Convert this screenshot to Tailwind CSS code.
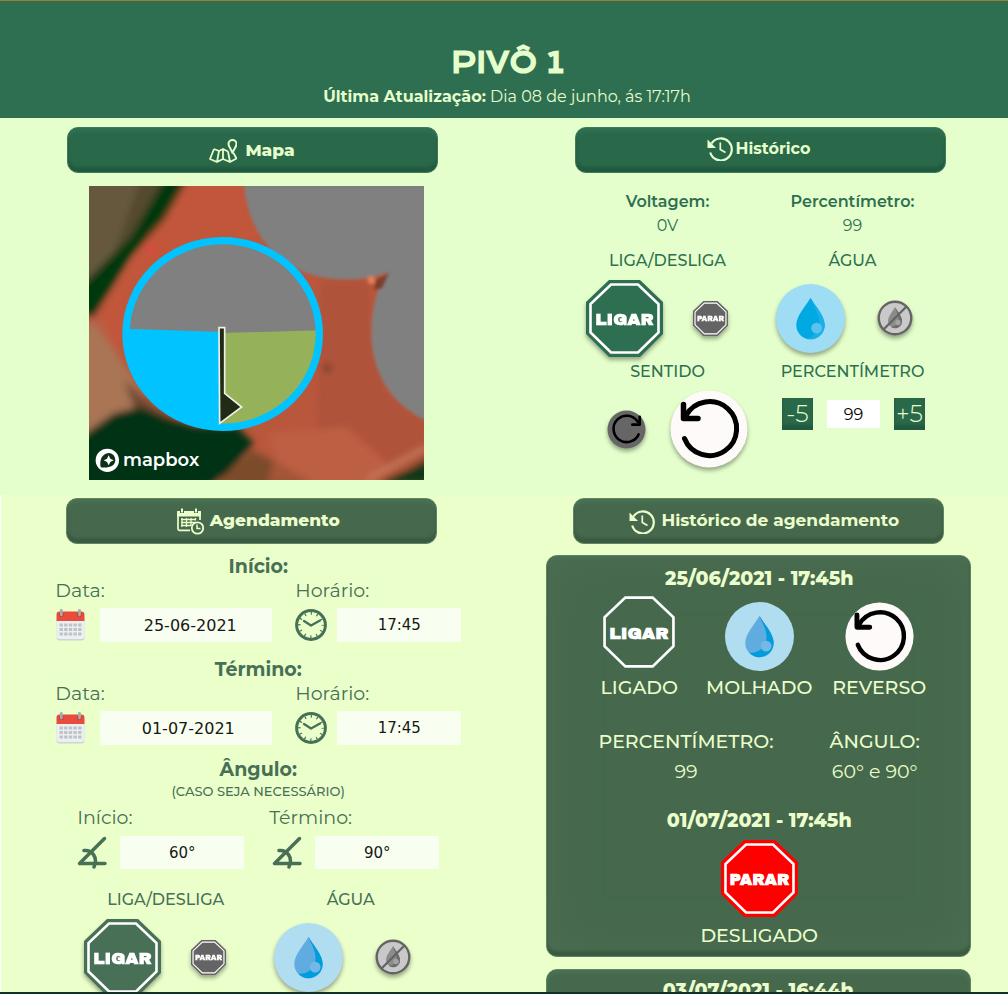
<!DOCTYPE html>
<html lang="pt-BR">
<head>
<meta charset="utf-8">
<meta name="viewport" content="width=device-width, initial-scale=1">
<title>Pivô 1</title>
<script src="https://cdn.jsdelivr.net/npm/@tailwindcss/browser@4"></script>
</head>
<body class="h-screen flex flex-col overflow-hidden bg-[#ebffcb] font-['Montserrat','Inter',sans-serif]">

<svg class="hidden" aria-hidden="true">
  <symbol id="oct" viewBox="0 0 77 77">
    <path d="M23 0H54L77 22V54L54 77H23L0 54V22Z" fill="currentColor"/>
    <path d="M25 4.500H52L72.500 24V52.500L52 72.500H25L4.500 52.500V24Z" fill="none" stroke="#fff" stroke-width="2.600"/>
  </symbol>
  <symbol id="ligar" viewBox="0 0 77 77">
    <use href="#oct"/>
    <text x="38.500" y="45" text-anchor="middle" fill="#fff" font-family="'Archivo Black', Montserrat, sans-serif" font-weight="900" font-size="17">LIGAR</text>
  </symbol>
  <symbol id="parar" viewBox="0 0 77 77">
    <use href="#oct"/>
    <text x="38.500" y="44.500" text-anchor="middle" fill="#fff" font-family="'Archivo Black', Montserrat, sans-serif" font-weight="900" font-size="16">PARAR</text>
  </symbol>
  <symbol id="agua-a" viewBox="-34 -34 68 68">
    <circle r="34" fill="#9eddf3"/>
    <path d="M0-20.500C4-13 14-3 14 6.500A14 14 0 0 1-14 6.500C-14-3-4-13 0-20.500Z" fill="#00a9e2"/>
    <path d="M0-20.500C4-13 14-3 14 6.500A14 14 0 0 1-3 20C6 17 11 9 8-1C6-8 2-14 0-20.500Z" fill="#18b0e6"/>
    <circle cx="6" cy="9.500" r="5.300" fill="#5cc1ee"/>
  </symbol>
  <symbol id="agua-b" viewBox="-34 -34 68 68">
    <circle r="34" fill="#b1ddf0"/>
    <path d="M0-20.500C4-13 14-3 14 6.500A14 14 0 0 1-14 6.500C-14-3-4-13 0-20.500Z" fill="#60abe0"/>
    <path d="M0-20.500C4-13 14-3 14 6.500A14 14 0 0 1-10 16C-2 17 7 11 7 1C7-8 2-14 0-20.500Z" fill="#009ddd"/>
    <circle cx="6.500" cy="9.500" r="5.300" fill="#74b8e6"/>
  </symbol>
  <symbol id="seco" viewBox="-18 -18 36 36">
    <circle r="16.300" fill="#c9c9c9" stroke="#646464" stroke-width="2.400"/>
    <path d="M0-11C2-7 7-2 7 3A7 7 0 0 1-7 3C-7-2-2-7 0-11Z" fill="#8c8c8c"/>
    <path d="M0-11C2-7 7-2 7 3A7 7 0 0 1-4 9C2 8 5 4 3-2Z" fill="#6c6c6c"/>
    <circle cx="3" cy="4.500" r="2.700" fill="#a3a3a3"/>
    <path d="M11.500-11.500L-11.500 11.500" stroke="#646464" stroke-width="2.300"/>
  </symbol>
  <symbol id="reverso" viewBox="-39 -39 78 78">
    <circle r="38.500" fill="#fffafa"/>
    <path d="M-24.500 9.500A27 27 0 1 0-23-13.500" fill="none" stroke="#000" stroke-width="5" stroke-linecap="round"/>
    <path d="M-25.500-24.500V-10.500H-11" fill="none" stroke="#000" stroke-width="5.500" stroke-linecap="round" stroke-linejoin="round"/>
  </symbol>
  <symbol id="horario" viewBox="-20 -20 40 40">
    <circle r="19.500" fill="#666"/>
    <path d="M12.500 5A13.500 13.500 0 1 1 11.500-8" fill="none" stroke="#000" stroke-width="2.600" stroke-linecap="round"/>
    <path d="M13.500-13V-5H6" fill="none" stroke="#000" stroke-width="2.800" stroke-linecap="round" stroke-linejoin="round"/>
  </symbol>
  <symbol id="hist" viewBox="0 0 26 25">
    <path d="M3.200 16.500A11 11 0 1 0 4.500 7.500" fill="none" stroke="currentColor" stroke-width="2.200"/>
    <path d="M.5 3.500V12H9Z" fill="currentColor"/>
    <path d="M13.300 6.500V13.500L18.500 16.500" fill="none" stroke="currentColor" stroke-width="1.700"/>
  </symbol>
  <symbol id="cal" viewBox="0 0 28 32">
    <path d="M0 11H28V28.500A3 3 0 0 1 25 31.500H3A3 3 0 0 1 0 28.500Z" fill="#cfd3d8"/>
    <path d="M0 11H28V27A3 3 0 0 1 25 30H3A3 3 0 0 1 0 27Z" fill="#ecf0f1"/>
    <path d="M3 2.500H25A3 3 0 0 1 28 5.500V12H0V5.500A3 3 0 0 1 3 2.500Z" fill="#e84c3d"/>
    <circle cx="4.800" cy="5.800" r="2.300" fill="#b33a30"/><circle cx="23" cy="5.800" r="2.300" fill="#b33a30"/>
    <path d="M4.800 1.500V6M23 1.500V6" stroke="#a5abb0" stroke-width="2.800" stroke-linecap="round"/>
    <path d="M3 16H25M3 20.500H25M3 25H25" stroke="#bdc3c7" stroke-width="3" stroke-dasharray="3.400 1.250"/>
  </symbol>
  <symbol id="clock" viewBox="-16 -16 32 32">
    <circle r="14.400" fill="none" stroke="currentColor" stroke-width="3"/>
    <circle r="11.600" fill="none" stroke="currentColor" stroke-width="2.600" stroke-dasharray="1.200 4.874" stroke-dashoffset=".6"/>
    <path d="M-7-4L0 .5L9-4.500" fill="none" stroke="currentColor" stroke-width="2.300" stroke-linecap="round" stroke-linejoin="round"/>
  </symbol>
  <symbol id="ang" viewBox="0 0 30 33">
    <path d="M27 2.500L2 27.500H27.500" fill="none" stroke="currentColor" stroke-width="3.500" stroke-linecap="round" stroke-linejoin="round"/>
    <path d="M6.500 14.500C14 13.500 21 21 16.500 31" fill="none" stroke="currentColor" stroke-width="3.500" stroke-linecap="round"/>
  </symbol>
</svg>

<header class="shrink-0 border-t border-[#9a7f38] bg-[#2f6f51] pt-11 pb-[9px] pl-[6px] text-center text-[#e5fecb]">
  <h1 class="font-['Krona_One','Montserrat',sans-serif] text-[28px] leading-9 font-extrabold">PIVÔ 1</h1>
  <p class="pt-1 text-base leading-6"><b class="font-bold">Última Atualização:</b> Dia 08 de junho, ás 17:17h</p>
</header>

<main class="flex min-h-0 flex-1 flex-col">
  <div class="grid shrink-0 grid-cols-2 bg-[#e4ffcb] pb-4">
    <section class="flex flex-col items-center pt-[9px]">
      <button class="flex h-[46px] w-[371px] items-center justify-center gap-2 rounded-[11px] border border-[#3e7b5b] bg-[#2a684a] pt-px text-[17px] font-extrabold text-[#e5fecb] shadow-[inset_0_-5px_3px_#215a40,inset_0_4px_3px_#2f7052]">
        <svg class="h-6 w-7" viewBox="0 0 28 24" fill="none" stroke="currentColor" stroke-width="1.800" stroke-linejoin="round" aria-hidden="true"><path d="M5 10L1 20L8 23L14 20L21 23L27.500 19.500L24.500 14M5 10L10 12L14 10L19 12.500M10 12L8 23M14 10V20M19 12.500L21 23"/><path d="M23.500 14C22 10 19.500 7.500 19.500 5A4 4 0 0 1 27.500 5C27.500 7.500 25 10 23.500 14Z" stroke-width="2"/></svg>
        Mapa
      </button>
      <svg class="mt-[13px] ml-2 h-[294px] w-[335px]" viewBox="25 18 1005 882" preserveAspectRatio="none" role="img" aria-label="Mapa do pivô">
        <defs><filter id="soft" x="-10%" y="-10%" width="120%" height="120%"><feGaussianBlur stdDeviation="11"/></filter><filter id="edge" x="-10%" y="-10%" width="120%" height="120%"><feGaussianBlur stdDeviation="4"/></filter></defs>
        <path fill="#b9573c" d="M25 18H1030V900H25Z"/>
        <g filter="url(#soft)">
          <path fill="#c1573b" d="M320 0H520L560 170L250 260L100 520L40 420Z"/>
          <path fill="#b75f47" d="M0 390L60 420L150 600L230 700L0 780Z"/>
          <path fill="#a97555" d="M0 430L50 440L190 640L170 690L0 770Z"/>
          <path fill="#6f4a30" d="M130 600L220 680L300 730L170 710Z"/>
          <path fill="#b0523a" d="M720 300H870V460L920 640L1040 730V850L860 900H700Z"/>
          <path fill="#bd5f43" d="M560 760L800 740L930 860L850 920H620Z"/>
          <path fill="#65583d" d="M0 0H280L190 130L60 270L0 330Z"/>
          <path fill="#544a2f" d="M180 0H280L190 130L100 220Z"/>
          <path fill="#04380c" d="M250 0H320L250 120L150 230L90 330L40 410H0V320L70 250L150 170Z"/>
          <path fill="#003312" d="M0 770L100 700L180 680L260 715L340 740H470L520 790L440 880L380 920H0Z"/>
          <path fill="#7b4b2b" d="M515 810L590 850L670 920H400Z"/>
          <path fill="#a55538" d="M580 840L700 910H560Z"/>
          <path fill="#073914" d="M1050 830L980 870L890 910H1050Z"/>
          <path stroke="#c98160" stroke-width="12" d="M1040 800L860 900"/>
          <circle cx="740" cy="565" r="13" fill="#75402a"/>
          <circle cx="212" cy="205" r="16" fill="#dc4740"/>
        </g>
        <g filter="url(#edge)">
          <path fill="#808080" d="M490 0C495 160 600 300 800 298C850 298 890 290 925 275C890 320 872 380 872 460C874 590 940 680 1050 728V0Z"/>
          <path fill="#7b4029" d="M885 300L925 280L905 325L880 330Z"/>
          <circle cx="872" cy="300" r="12" fill="#e07f52"/>
        </g>
        <ellipse cx="426" cy="462" rx="290" ry="280" fill="#808080"/>
        <path d="M136 446L425 456V742A290 280 0 0 1 136 446Z" fill="#00c3ff"/>
        <path d="M425 459L716 451A290 280 0 0 1 425 742Z" fill="#95b25a"/>
        <ellipse cx="426" cy="462" rx="290" ry="280" fill="none" stroke="#00c3ff" stroke-width="22"/>
        <path d="M415 443H432V640L483 681L417 730Z" fill="#202a14" stroke="#f0f0e6" stroke-width="5"/>
        <circle cx="80" cy="841" r="35" fill="#fff"/>
        <path d="M60 862C55 835 68 819 86 819A21 21 0 0 1 104 840C104 858 85 865 60 862Z" fill="#0c3018"/>
        <path d="M84 826L89 836L99 841L89 846L84 856L79 846L69 841L79 836Z" fill="#fff"/>
        <text x="127" y="858" fill="#fff" font-family="Montserrat, Lato, sans-serif" font-weight="600" font-size="54">mapbox</text>
      </svg>
    </section>

    <section class="flex flex-col items-center pt-[9px] pl-2 text-[#2f6f51]">
      <button class="flex h-[46px] w-[371px] items-center justify-center gap-[3px] rounded-[11px] border border-[#3e7b5b] bg-[#2a684a] pr-[3px] pb-[3px] text-base font-bold text-[#e5fecb] shadow-[inset_0_-5px_3px_#215a40,inset_0_4px_3px_#2f7052]">
        <svg class="h-[25px] w-[26px]" aria-hidden="true"><use href="#hist"/></svg>
        Histórico
      </button>
      <dl class="mt-[17px] grid w-[370px] grid-cols-2 text-center text-base leading-6">
        <div><dt class="font-semibold">Voltagem:</dt><dd>0V</dd></div>
        <div><dt class="font-semibold">Percentímetro:</dt><dd>99</dd></div>
      </dl>
      <div class="mt-[11px] grid w-[370px] grid-cols-2 text-center text-base leading-6 font-medium">
        <div>
          <h3>LIGA/DESLIGA</h3>
          <div class="flex h-[90px] items-center justify-center gap-[30px] pr-[22px]">
            <button aria-label="Ligar" class="drop-shadow-[0_3px_2px_rgba(0,0,0,0.35)]"><svg class="size-[77px] text-[#2f6f51]"><use href="#ligar"/></svg></button>
            <button aria-label="Parar" class="drop-shadow-[0_3px_2px_rgba(0,0,0,0.35)]"><svg class="size-[35px] text-[#646464]"><use href="#parar"/></svg></button>
          </div>
        </div>
        <div>
          <h3>ÁGUA</h3>
          <div class="flex h-[90px] items-center justify-center gap-8 pr-4">
            <button aria-label="Com água" class="drop-shadow-[0_3px_2px_rgba(0,0,0,0.35)]"><svg class="size-[69px]"><use href="#agua-a"/></svg></button>
            <button aria-label="Sem água" class="drop-shadow-[0_3px_2px_rgba(0,0,0,0.35)]"><svg class="size-9"><use href="#seco"/></svg></button>
          </div>
        </div>
        <div class="-mt-[3px]">
          <h3>SENTIDO</h3>
          <div class="flex h-[90px] items-center justify-center gap-6 pl-5">
            <button aria-label="Sentido horário" class="drop-shadow-[0_3px_2px_rgba(0,0,0,0.35)]"><svg class="size-[39px]"><use href="#horario"/></svg></button>
            <button aria-label="Sentido reverso" class="drop-shadow-[0_3px_2px_rgba(0,0,0,0.35)]"><svg class="size-[78px]"><use href="#reverso"/></svg></button>
          </div>
        </div>
        <div class="-mt-[3px]">
          <label for="perc">PERCENTÍMETRO</label>
          <div class="flex items-center justify-center gap-[14px] pt-[14px] pl-[2px] font-light">
            <button class="h-8 w-[31px] bg-[#2a684a] text-2xl leading-8 text-[#e5fecb] shadow-[inset_0_-5px_3px_#215a40]">-5</button>
            <input id="perc" value="99" class="h-7 w-[53px] bg-white text-center text-base font-normal text-black">
            <button class="h-8 w-[31px] bg-[#2a684a] text-2xl leading-8 text-[#e5fecb] shadow-[inset_0_-5px_3px_#215a40]">+5</button>
          </div>
        </div>
      </div>
    </section>
  </div>

  <div class="-mt-px grid min-h-0 flex-1 grid-cols-2 overflow-hidden border-l border-white bg-[#ebffcb]">
    <section class="flex min-h-0 flex-col items-center overflow-hidden pt-[3px] pr-[3px] text-[#487056]">
      <button class="flex h-[46px] w-[371px] shrink-0 items-center justify-center gap-[6px] rounded-[11px] border border-[#5f8562] bg-[#46694d] pl-[14px] text-[17px] font-extrabold text-[#ebfecb] shadow-[inset_0_-5px_3px_#3b5a42,inset_0_4px_3px_#4a7053]">
        <svg class="size-[27px]" viewBox="0 0 27 27" fill="none" stroke="currentColor" aria-hidden="true"><path d="M13 22.300H2.500A1.500 1.500 0 0 1 1 20.800V7H23V12" stroke-width="1.700"/><path d="M0 3H24V8.500H0Z" fill="currentColor" stroke="none"/><path d="M5 .5V5M19 .5V5" stroke="#46694d" stroke-width="4"/><path d="M5 .5V4.500M19 .5V4.500" stroke-width="2"/><path d="M4 11.500H19M4 17.500H14M4 14.500H19M5 10V19M9.500 10V19M14 10V18M18.500 10V12.500" stroke-width="1.300"/><circle cx="20.500" cy="20" r="5.700" stroke-width="1.800"/><path d="M20 16.500V20.500H23.500" stroke-width="1.500"/></svg>
        Agendamento
      </button>
      <div class="flex shrink-0 flex-col items-center pt-[11px] pl-[14px] text-[19px] leading-6">
        <fieldset class="w-[406px]">
          <legend class="w-full text-center font-bold">Início:</legend>
          <div class="flex">
            <div class="w-60"><label for="d1">Data:</label>
              <div class="flex items-center gap-[14px] pt-[5px] pb-4"><svg class="h-8 w-[31px]" aria-hidden="true"><use href="#cal"/></svg><input id="d1" value="25-06-2021" class="h-[34px] w-[172px] bg-white/70 pl-2 text-center font-['Syncopate','DejaVu_Sans',sans-serif] text-base text-neutral-900"></div></div>
            <div><label for="h1">Horário:</label>
              <div class="flex items-center gap-[10px] pt-[5px] pb-4"><svg class="size-8" aria-hidden="true"><use href="#clock"/></svg><input id="h1" value="17:45" class="h-[34px] w-[124px] bg-white/70 text-center font-['Syncopate','DejaVu_Sans',sans-serif] text-[15px] text-neutral-900"></div></div>
          </div>
        </fieldset>
        <fieldset class="w-[406px]">
          <legend class="w-full text-center font-bold">Término:</legend>
          <div class="flex">
            <div class="w-60"><label for="d2">Data:</label>
              <div class="flex items-center gap-[14px] pt-[5px] pb-[13px]"><svg class="h-8 w-[31px]" aria-hidden="true"><use href="#cal"/></svg><input id="d2" value="01-07-2021" class="h-[34px] w-[172px] bg-white/70 pl-1 text-center font-['Syncopate','DejaVu_Sans',sans-serif] text-base text-neutral-900"></div></div>
            <div><label for="h2">Horário:</label>
              <div class="flex items-center gap-[10px] pt-[5px] pb-[13px]"><svg class="size-8" aria-hidden="true"><use href="#clock"/></svg><input id="h2" value="17:45" class="h-[34px] w-[124px] bg-white/70 text-center font-['Syncopate','DejaVu_Sans',sans-serif] text-[15px] text-neutral-900"></div></div>
          </div>
        </fieldset>
        <fieldset class="w-[362px]">
          <legend class="w-full text-center"><span class="block font-bold">Ângulo:</span><span class="block text-[13px] leading-[18px] font-medium">(CASO SEJA NECESSÁRIO)</span></legend>
          <div class="flex pt-[6px]">
            <div class="w-48"><label for="a1">Início:</label>
              <div class="flex items-center gap-3 pt-[6px]"><svg class="h-[33px] w-[31px]" aria-hidden="true"><use href="#ang"/></svg><input id="a1" value="60°" class="h-[33px] w-[124px] bg-white/70 text-center font-['Syncopate','DejaVu_Sans',sans-serif] text-[15px] text-neutral-900"></div></div>
            <div><label for="a2">Término:</label>
              <div class="flex items-center gap-3 pt-[6px] pl-[3px]"><svg class="h-[33px] w-[31px]" aria-hidden="true"><use href="#ang"/></svg><input id="a2" value="90°" class="h-[33px] w-[124px] bg-white/70 text-center font-['Syncopate','DejaVu_Sans',sans-serif] text-[15px] text-neutral-900"></div></div>
          </div>
        </fieldset>
        <div class="mt-[19px] grid w-[370px] grid-cols-2 text-center text-base leading-6 font-medium">
          <div>
            <h3>LIGA/DESLIGA</h3>
            <div class="flex h-[90px] items-center justify-center gap-[30px] pr-[22px]">
              <button aria-label="Ligar" class="drop-shadow-[0_3px_2px_rgba(0,0,0,0.35)]"><svg class="size-[77px] text-[#487056]"><use href="#ligar"/></svg></button>
              <button aria-label="Parar" class="drop-shadow-[0_3px_2px_rgba(0,0,0,0.35)]"><svg class="size-[35px] text-[#646464]"><use href="#parar"/></svg></button>
            </div>
          </div>
          <div>
            <h3>ÁGUA</h3>
            <div class="flex h-[90px] items-center justify-center gap-8 pr-4">
              <button aria-label="Com água" class="drop-shadow-[0_3px_2px_rgba(0,0,0,0.35)]"><svg class="size-[69px]"><use href="#agua-b"/></svg></button>
              <button aria-label="Sem água" class="drop-shadow-[0_3px_2px_rgba(0,0,0,0.35)]"><svg class="size-9"><use href="#seco"/></svg></button>
            </div>
          </div>
        </div>
      </div>
    </section>

    <section class="flex min-h-0 flex-col items-center overflow-hidden pt-[3px] pl-1 text-[#ebfecb]">
      <button class="flex h-[46px] w-[371px] shrink-0 items-center justify-center gap-[6px] rounded-[11px] border border-[#5f8562] bg-[#46694d] pl-3 text-[17px] font-bold shadow-[inset_0_-5px_3px_#3b5a42,inset_0_4px_3px_#4a7053]">
        <svg class="h-[25px] w-[26px]" aria-hidden="true"><use href="#hist"/></svg>
        Histórico de agendamento
      </button>
      <article class="mt-[11px] w-[425px] shrink-0 rounded-[11px] border border-[#5f8562] bg-[#46694d] pt-[11px] pb-2 pl-[2px] text-center text-[19px] leading-6 font-medium shadow-[inset_0_-5px_3px_#3b5a42,inset_0_4px_3px_#4a7053,inset_0_0_50px_#4d6e53]">
        <h3 class="font-extrabold">25/06/2021 - 17:45h</h3>
        <div class="mx-auto grid w-[360px] grid-cols-3 items-end pt-[2px]">
          <div class="flex flex-col items-center"><svg class="size-[78px] text-[#46694d]" role="img" aria-label="Ligar"><use href="#ligar"/></svg><p class="pt-[5px]">LIGADO</p></div>
          <div class="flex flex-col items-center"><svg class="size-[69px]" role="img" aria-label="Água"><use href="#agua-b"/></svg><p class="pt-[5px]">MOLHADO</p></div>
          <div class="flex flex-col items-center"><svg class="size-[69px]" role="img" aria-label="Reverso"><use href="#reverso"/></svg><p class="pt-[5px]">REVERSO</p></div>
        </div>
        <dl class="flex justify-center gap-14 pt-[27px] leading-[30px]">
          <div><dt>PERCENTÍMETRO:</dt><dd class="font-normal">99</dd></div>
          <div><dt>ÂNGULO:</dt><dd class="font-normal">60° e 90°</dd></div>
        </dl>
        <h3 class="pt-[22px] font-extrabold">01/07/2021 - 17:45h</h3>
        <svg class="mx-auto mt-[7px] size-[77px] text-[#fe0000]" role="img" aria-label="Parar"><use href="#parar"/></svg>
        <p class="pt-[7px]">DESLIGADO</p>
      </article>
      <article class="mt-3 w-[425px] shrink-0 rounded-[11px] border border-[#5f8562] bg-[#46694d] pt-[9px] pb-10 text-center text-[19px] leading-6 font-extrabold shadow-[inset_0_4px_3px_#4a7053]">
        <h3>03/07/2021 - 16:44h</h3>
      </article>
    </section>
  </div>
</main>
<div class="h-[2px] shrink-0 bg-[#12302a]"></div>
</body>
</html>
